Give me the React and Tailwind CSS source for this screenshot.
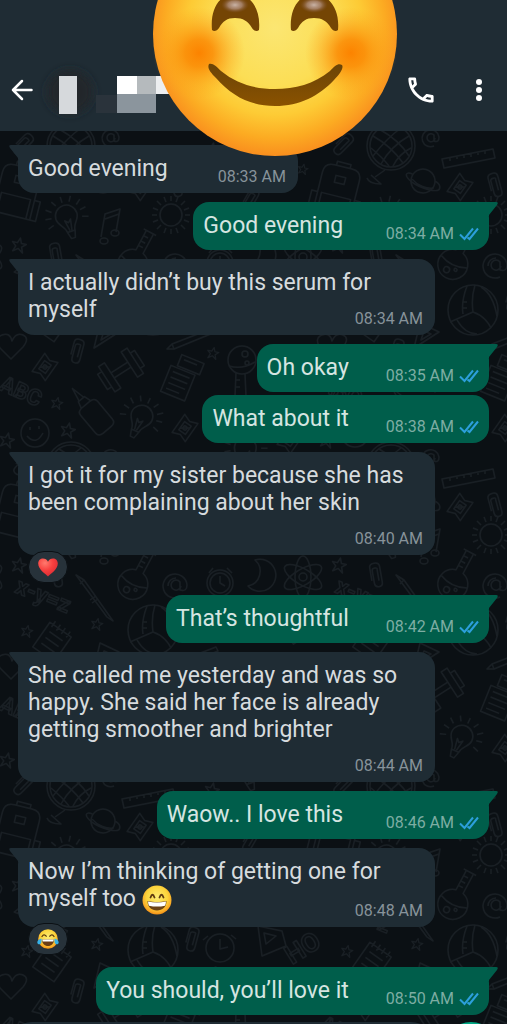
import { useState } from "react";

const messages = [
  { id: 1, side: "in", text: "Good evening", time: "08:33 AM", tail: true },
  { id: 2, side: "out", text: "Good evening ", time: "08:34 AM", tail: true },
  { id: 3, side: "in", text: "I actually didn’t buy this serum for myself", time: "08:34 AM", tail: true, layout: "tuck" },
  { id: 4, side: "out", text: "Oh okay", time: "08:35 AM", tail: true },
  { id: 5, side: "out", text: "What about it", time: "08:38 AM" },
  { id: 6, side: "in", text: "I got it for my sister because she has been complaining about her skin", time: "08:40 AM", tail: true, layout: "below", reaction: "heart" },
  { id: 7, side: "out", text: "That’s thoughtful", time: "08:42 AM", tail: true },
  { id: 8, side: "in", text: "She called me yesterday and was so happy. She said her face is already getting smoother and brighter", time: "08:44 AM", tail: true, layout: "below" },
  { id: 9, side: "out", text: "Waow.. I love this ", time: "08:46 AM", tail: true },
  { id: 10, side: "in", text: "Now I’m thinking of getting one for myself too", emoji: true, time: "08:48 AM", tail: true, layout: "tuck", reaction: "joy" },
  { id: 11, side: "out", text: "You should, you’ll love it", time: "08:50 AM", tail: true },
];

function HeartIcon() {
  return (
    <svg viewBox="0 0 20 19" className="h-[19px] w-5" aria-label="heart">
      <defs>
        <radialGradient id="heartFill" cx="0.35" cy="0.25" r="0.8">
          <stop offset="0" stopColor="#ff7a6e" />
          <stop offset="0.5" stopColor="#f8403f" />
          <stop offset="1" stopColor="#d92a33" />
        </radialGradient>
      </defs>
      <path d="M10 18.500C8 16.500 0.200 11.500 0.200 5.600C0.200 2.500 2.400 0.600 5 0.600C7.200 0.600 9 1.800 10 3.800C11 1.800 12.800 0.600 15 0.600C17.600 0.600 19.800 2.500 19.800 5.600C19.800 11.500 12 16.500 10 18.500Z" fill="url(#heartFill)" />
    </svg>
  );
}

function FaceFill({ id }) {
  return (
    <radialGradient id={id} cx="0.5" cy="0.4" r="0.6">
      <stop offset="0" stopColor="#fdec72" />
      <stop offset="0.6" stopColor="#fbd53c" />
      <stop offset="0.88" stopColor="#f9a825" />
      <stop offset="1" stopColor="#ef8e16" />
    </radialGradient>
  );
}

function JoyIcon() {
  return (
    <svg viewBox="0 0 22 20" className="h-5 w-[22px]" aria-label="tears of joy">
      <defs><FaceFill id="joyFill" /></defs>
      <circle cx="11" cy="10" r="9.800" fill="url(#joyFill)" />
      <path d="M5 7.500Q7 4.500 9.200 7.200M12.800 7.200Q15 4.500 17 7.500" fill="none" stroke="#5d3a10" strokeWidth="1.300" strokeLinecap="round" />
      <path d="M5 10.500H17C17 14.500 14.500 17 11 17S5 14.500 5 10.500Z" fill="#6b3d15" />
      <path d="M5.300 10.500H16.700L16.300 12.500H5.700Z" fill="#fff" />
      <path d="M4.500 9.500C3 9.700 0.300 11.300 0.300 13.500C0.300 15.800 3.500 16 4.200 13.800C4.600 12.600 4.700 11 4.500 9.500ZM17.500 9.500C19 9.700 21.700 11.300 21.700 13.500C21.700 15.800 18.500 16 17.800 13.800C17.400 12.600 17.300 11 17.500 9.500Z" fill="#35b1e8" />
    </svg>
  );
}

function GrinIcon() {
  return (
    <svg viewBox="0 0 30 30" className="inline-block h-[30px] w-[30px] align-top" aria-label="grinning face">
      <defs><FaceFill id="grinFill" /></defs>
      <circle cx="15" cy="15" r="14.500" fill="url(#grinFill)" />
      <path d="M8.500 12.500Q10.500 7 12.500 12.500M17.500 12.500Q19.500 7 21.500 12.500" fill="none" stroke="#5d3a10" strokeWidth="1.800" strokeLinecap="round" />
      <path d="M5.500 16Q15 18.300 24.500 16C24.500 22 20.500 25.500 15 25.500S5.500 22 5.500 16Z" fill="#6b4316" />
      <path d="M6 16.500Q15 18.700 24 16.500Q23.900 19 23 20.700Q15 22.500 7 20.700Q6.100 19 6 16.500Z" fill="#fff" />
    </svg>
  );
}

function SmileSticker() {
  return (
    <svg viewBox="0 0 244 157" className="pointer-events-none absolute left-[153px] top-0 z-10 h-[157px] w-[244px]" aria-label="smiling face">
      <defs>
        <radialGradient id="stickerFill" gradientUnits="userSpaceOnUse" cx="122" cy="28" r="128">
          <stop offset="0" stopColor="#fbe672" />
          <stop offset="0.45" stopColor="#fcde55" />
          <stop offset="0.68" stopColor="#fdcb35" />
          <stop offset="0.86" stopColor="#fcab22" />
          <stop offset="1" stopColor="#f98f1e" />
        </radialGradient>
        <radialGradient id="stickerCheek">
          <stop offset="0" stopColor="#fc8300" />
          <stop offset="0.3" stopColor="#fb8a05" stopOpacity="0.85" />
          <stop offset="0.7" stopColor="#fb9a14" stopOpacity="0.35" />
          <stop offset="1" stopColor="#fca51c" stopOpacity="0" />
        </radialGradient>
        <radialGradient id="eyeShine">
          <stop offset="0" stopColor="#c9b3a6" />
          <stop offset="0.5" stopColor="#ad8b78" stopOpacity="0.8" />
          <stop offset="1" stopColor="#7d4e2c" stopOpacity="0" />
        </radialGradient>
        <linearGradient id="stickerMouth" x1="0" y1="0" x2="0" y2="1">
          <stop offset="0" stopColor="#6b4407" />
          <stop offset="1" stopColor="#8a5200" />
        </linearGradient>
      </defs>
      <circle cx="122" cy="34" r="122" fill="url(#stickerFill)" />
      <circle cx="46" cy="53" r="46" fill="url(#stickerCheek)" />
      <circle cx="198" cy="53" r="46" fill="url(#stickerCheek)" />
      <path d="M59 30C57 8 67 -6 82 -6S108 8 106 30C104 32 101 31 99 28C95 21 90 18 82 18S70 21 66 28C64 31 61 32 59 30Z" fill="#744504" />
      <path d="M138 30C136 8 147 -6 161 -6S187 8 185 30C183 32 180 31 178 28C174 21 169 18 161 18S149 21 145 28C143 31 140 32 138 30Z" fill="#744504" />
      <ellipse cx="82" cy="5" rx="14" ry="8" fill="url(#eyeShine)" />
      <ellipse cx="161" cy="5" rx="14" ry="8" fill="url(#eyeShine)" />
      <path d="M56 64C60 63 63 66 68 71C84 84 102 89 122 89S161 84 177 71C182 66 185 63 189 65C191 68 187 74 181 80C166 96 147 106 122 106S79 96 63 78C57 72 54 68 56 64Z" fill="url(#stickerMouth)" />
    </svg>
  );
}

function Star({ x, y, s = 1 }) {
  return <path transform={`translate(${x} ${y}) rotate(12) scale(${s})`} d="M0 -7L2 -2L7 -2L3 1.500L5 7L0 3.500L-5 7L-3 1.500L-7 -2L-2 -2Z" />;
}

function Sharpener({ x, y }) {
  return (
    <g transform={`translate(${x} ${y}) rotate(-55)`}>
      <path d="M-11 -8H11L8 0L11 8H-11L-8 0Z" />
      <path d="M-5 -4H5V4H-5ZM-3 -4L3 4" />
      <circle r="2" />
    </g>
  );
}

function Clip({ x, y, r = 15 }) {
  return <path transform={`translate(${x} ${y}) rotate(${r})`} d="M-5 5V-8Q-5 -12 0 -12T5 -8V8Q5 12 1 12T-3 8V-5Q-3 -7 0 -7T2 -5V6" />;
}

function Bulb({ x, y, r = -18 }) {
  return (
    <g transform={`translate(${x} ${y}) rotate(${r})`}>
      <path d="M-4 14C-4 7 -11 5 -11 -2A11 11 0 0 1 11 -2C11 5 4 7 4 14L2 21H-2ZM-4 14H4M-1 13L-3 2L0 5L3 2L1 13" />
      <path d="M0 -16V-22M7 -15L10 -20M13 -10L18 -14M15 -4L21 -5M15 3L21 5M-7 -15L-10 -20M-13 -10L-18 -14M-15 -4L-21 -5M-15 3L-21 5" />
    </g>
  );
}

// one 320px tile of the wallpaper
function Doodles() {
  return (
    <g>
      <g transform="translate(71 146)">
        <circle r="24" /><circle r="21" />
        <path d="M-18 -10Q0 0 12 17M-12 -17Q8 -6 18 10M-20 2Q-8 12 -2 20M10 -18Q-4 -8 -18 10M18 -10Q0 0 -10 18M20 2Q8 8 2 20M-6 24L-16 31M-20 29L-10 38Q-22 38 -24 32" />
      </g>
      <g transform="translate(103 181) rotate(15)">
        <circle r="12" /><path d="M-12 -4C-20 -5 -20 0 -10 4S18 8 18 3S14 -2 12 -3M-11 1C-4 6 6 7 12 4" />
      </g>
      <path transform="translate(111 138)" d="M4 0A4 4 0 1 1 3 -3V3Q8 5 8 -1A8.500 8.500 0 1 0 3 8" />
      <path d="M122 159L173 149L175 158L124 168ZM130 158V161M137 156V159M144 155V158M151 153V157M158 152V155M165 151V154" />
      <Sharpener x={140} y={187} />
      <Clip x={175} y={185} r={-15} />
      <Clip x={23} y={144} r={45} />
      <Star x={303} y={169} s={0.7} />
      <g transform="translate(17 188) rotate(14)">
        <path d="M-18 28V-12Q-18 -22 -8 -22H10Q20 -22 20 -12V28ZM-14 28V8H16V28M-4 -12H6V-5H-4ZM-6 -22V-26H8V-22M-18 8H-24V28H-18M20 8H26V28H20" />
      </g>
      <g transform="translate(171 215)">
        <circle r="11" />
        <path d="M0 -14V-19M0 14V19M-14 0H-19M14 0H19M10 -10L14 -14M-10 10L-14 14M10 10L14 14M-10 -10L-14 -14M5 -13L7 -18M13 -5L18 -7M13 5L18 7M5 13L7 18M-5 13L-7 18M-13 5L-18 7M-13 -5L-18 -7M-5 -13L-7 -18" />
      </g>
      <Bulb x={67} y={218} />
      <path d="M101 237L105 214L120 209L116 232M105 219L119 214" />
      <ellipse cx="104" cy="241" rx="4" ry="3" /><ellipse cx="115" cy="233" rx="4" ry="3" />
      <Star x={19} y={245} />
      <g transform="translate(133 264) rotate(28)">
        <path d="M-4 -14V-36H4V-14A15 15 0 1 1 -4 -14ZM-7 -36H7M-4 -30H1M-4 -24H1M-4 -19H1M-14 -2Q0 4 14 -3" />
        <circle cx="-3" cy="8" r="3" /><circle cx="5" cy="4" r="1.500" />
      </g>
      <path transform="translate(176 266)" d="M5 0A5 5 0 1 1 4 -4V4Q11 6 11 -1A12 12 0 1 0 4 11M-8 0A8 8 0 0 1 0 -8" />
      <g transform="translate(153 310)">
        <circle r="25" /><path d="M2 -25Q-2 -12 0 2L-23 12M0 2Q12 6 18 18M-6 -24Q-12 -8 -10 4M8 -23Q20 -16 24 6M4 24Q-8 24 -16 10M-10 -8H-6M-10 -2H-6" />
      </g>
      <path d="M11 39L0 28Q-6 18 2 15T12 21Q16 12 23 15T23 27Z" />
      <Sharpener x={45} y={47} />
      <Clip x={77} y={31} />
      <path d="M94 28L100 3L119 12ZM101 20L104 11L111 14Z" />
      <g transform="translate(121 50) rotate(-33)">
        <path d="M-10 -3H10V3H-10ZM-17 -15H-10V15H-17ZM10 -15H17V15H10ZM-22 -9H-17V9H-22ZM17 -9H22V9H17Z" />
      </g>
      <text x="-2" y="70" fontSize="22" fontWeight="700" transform="rotate(24 0 70)">ABC</text>
      <Star x={57} y={83} s={0.8} />
      <g transform="translate(93 93) rotate(-40)">
        <path d="M-11 -6Q-11 -11 -5 -11H5Q11 -11 11 -6V17Q11 22 5 22H-5Q-11 22 -11 17ZM-6 -11L-4 -18H4L6 -11M-3 -18L0 -32L3 -18" />
      </g>
      <Bulb x={141} y={98} r={25} />
      <circle cx="35" cy="113" r="14" /><path d="M27 116Q36 126 43 113M30 107V110M39 106V109" />
      <Star x={68} y={110} /><Star x={7} y={120} />
      <g transform="translate(181 58) rotate(22)">
        <path d="M-14 -8H12V20H-14ZM-10 -3H8M-10 3H8M-10 9H8M-10 15H4M-8 -22H16V-10H-8ZM-4 -18H10" />
      </g>
      <Sharpener x={185} y={108} />
      <path d="M167 29L172 24L216 7L218 11L174 29ZM172 24L174 29" />
      <Star x={213} y={33} s={0.8} />
      <g transform="translate(242 40)">
        <circle r="14" /><path d="M-13 6Q0 10 13 2M-6 13L-7 36H4L3 14M-7 20H-2M-7 27H-2" /><circle cx="3" cy="-6" r="3" /><circle cx="5" cy="3" r="2" />
      </g>
      <text x="14" y="272" fontSize="23" fontWeight="700" transform="rotate(22 14 272)">x-y=z</text>
      <path d="M76 255L84 260L113 301L107 297ZM84 260L80 264M96 276L90 280M98 279L92 283" />
      <Star x={97} y={304} s={0.8} /><Star x={27} y={311} s={0.8} />
      <path transform="translate(52 322) rotate(35)" d="M-13 -15H13V15H-13ZM-8 -7H8M-8 0H8M-8 7H8M-9 -19V-12M-3 -19V-12M3 -19V-12M9 -19V-12" />
      <circle cx="220" cy="263" r="13" /><circle cx="220" cy="263" r="10" /><path d="M220 256V263L225 266M209 253L213 248M227 248L232 253" />
      <path d="M255 240A16 16 0 1 1 248 266A15 15 0 0 0 255 240Z" />
      <g transform="translate(303 257)">
        <ellipse rx="21" ry="8" transform="rotate(30)" /><ellipse rx="21" ry="8" transform="rotate(90)" /><ellipse rx="21" ry="8" transform="rotate(150)" /><circle r="4" />
      </g>
      <Clip x={192} y={299} /><Clip x={56} y={255} r={-10} />
      <circle cx="220" cy="308" r="14" /><path d="M220 299V309L228 307M208 296L203 300M231 295L236 299" />
      <path d="M258 286L282 291L286 306L262 316ZM264 293L276 296L266 304Z" />
      <text x="292" y="325" fontSize="26" fontWeight="700" transform="rotate(-32 292 325)">HO</text>
      <Bulb x={246} y={130} /><Star x={212} y={150} /><Star x={290} y={85} />
      <Sharpener x={290} y={120} /><Clip x={250} y={200} r={30} />
    </g>
  );
}

// shapes crossing a tile edge are carried on by the shifted copies
function Wallpaper() {
  return (
    <svg className="pointer-events-none absolute inset-0 h-full w-full" aria-hidden="true">
      <defs>
        <pattern id="doodles" width="320" height="320" y="-131" patternUnits="userSpaceOnUse">
          <g fill="none" stroke="#191f24" strokeWidth="1.500" strokeLinejoin="round" fontFamily="Roboto, sans-serif">
            <Doodles />
            <g transform="translate(320 0)"><Doodles /></g>
            <g transform="translate(-320 0)"><Doodles /></g>
            <g transform="translate(0 -320)"><Doodles /></g>
          </g>
        </pattern>
      </defs>
      <rect width="100%" height="100%" fill="url(#doodles)" />
    </svg>
  );
}

// blurred-out avatar and contact name
function HiddenContact() {
  return (
    <svg viewBox="0 0 135 80" className="h-20 w-[135px] overflow-visible" aria-hidden="true">
      <defs>
        <filter id="soft" x="-30%" y="-30%" width="160%" height="160%"><feGaussianBlur stdDeviation="4" /></filter>
      </defs>
      <ellipse cx="30" cy="42" rx="23" ry="22" fill="#22262a" filter="url(#soft)" />
      <rect x="56" y="45" width="21" height="18" fill="#2a333b" />
      <rect x="19" y="26" width="18" height="38" fill="#d6d9dc" />
      <rect x="77" y="26" width="20" height="18" fill="#fff" />
      <rect x="97" y="26" width="19" height="18" fill="#b5babd" />
      <rect x="116" y="26" width="19" height="18" fill="#eceef0" />
      <path d="M77 44H116V63H77Z" fill="#8b959d" />
    </svg>
  );
}

function Ticks() {
  return (
    <svg viewBox="0 0 20 14" className="h-[14px] w-5" fill="none" stroke="#2c9fdb" strokeWidth="2" aria-label="read">
      <path d="M1 7.500L5.500 12L14 1.500M8.500 10.500L10.500 12L19 1.500" />
    </svg>
  );
}

function Header() {
  return (
    <header className="relative z-10 flex h-[131px] shrink-0 items-center bg-[#1f2c34] pt-[49px] pr-4 pl-[11px] text-white">
      <button type="button" aria-label="Back">
        <svg viewBox="0 0 22 22" className="h-[22px] w-[22px]" fill="none" stroke="currentColor" strokeWidth="2.500" strokeLinecap="round" strokeLinejoin="round">
          <path d="M20.500 11H2M11 2L2 11L11 20" />
        </svg>
      </button>
      <div className="ml-[7px]">
        <HiddenContact />
      </div>
      <div className="ml-auto flex items-center gap-8">
        <button type="button" aria-label="Call">
          <svg viewBox="2 2 20 20" className="h-7 w-7" fill="currentColor">
            <path d="M6.540 5c.06.890.210 1.760.450 2.590l-1.200 1.200c-.410-1.200-.670-2.470-.760-3.790h1.510m9.860 12.020c.850.240 1.720.390 2.600.450v1.490c-1.320-.090-2.590-.350-3.800-.750l1.200-1.190M7.500 3H4c-.550 0-1 .450-1 1 0 9.390 7.610 17 17 17 .550 0 1-.450 1-1v-3.490c0-.550-.450-1-1-1-1.240 0-2.450-.200-3.570-.570-.100-.040-.210-.050-.310-.050-.260 0-.510.100-.710.290l-2.200 2.200c-2.830-1.450-5.150-3.760-6.590-6.590l2.200-2.200c.280-.280.360-.670.250-1.020C8.700 6.450 8.500 5.250 8.500 4c0-.550-.450-1-1-1z" />
          </svg>
        </button>
        <button type="button" aria-label="More options" className="flex w-6 flex-col items-center gap-[2px]">
          <span className="h-[6px] w-[6px] rounded-full bg-white"></span>
          <span className="h-[6px] w-[6px] rounded-full bg-white"></span>
          <span className="h-[6px] w-[6px] rounded-full bg-white"></span>
        </button>
      </div>
      <SmileSticker />
    </header>
  );
}

function Tail({ out }) {
  return out ? (
    <svg viewBox="0 0 25 14" className="absolute top-0 -right-[9px] h-[14px] w-[25px]" fill="#005e4b">
      <path d="M0 0H23Q26 0 24 3L16 13V14H0Z" />
    </svg>
  ) : (
    <svg viewBox="0 0 25 14" className="absolute top-0 -left-[9px] h-[14px] w-[25px]" fill="#1f2c34">
      <path d="M25 0H2Q-1 0 1 3L9 13V14H25Z" />
    </svg>
  );
}

function Reaction({ name }) {
  return (
    <span className="absolute -bottom-7 left-[10px] flex h-8 w-10 items-center justify-center rounded-full border border-[#0b1014] bg-[#27323a]">
      {name === "heart" ? <HeartIcon /> : <JoyIcon />}
    </span>
  );
}

function IncomingMessage({ message }) {
  const { text, time, layout, emoji, reaction } = message;

  return (
    <li
      className={`relative mt-[9px] max-w-[417px] self-start rounded-2xl bg-[#1f2c34] pt-[10px] pr-3 pb-2 pl-[10px] text-[23px] leading-[27px] text-[#d6dbde] ${
        reaction ? "mb-[31px]" : ""
      } ${layout ? "flow-root w-full" : "flex items-end gap-[50px]"}`}
    >
      <Tail />
      <p className={layout === "tuck" ? "relative inline" : layout === "below" ? "relative" : "relative mb-[3px]"}>
        {text}
        {emoji && <> <GrinIcon /></>}
      </p>
      <time
        className={`text-[16px] leading-4 text-[#87939a] ${
          layout === "tuck" ? `float-right ${emoji ? "mt-[18px]" : "mt-[15px]"}` : layout === "below" ? "mt-[15px] block text-right" : ""
        }`}
      >
        {time}
      </time>
      {reaction && <Reaction name={reaction} />}
    </li>
  );
}

function OutgoingMessage({ message }) {
  return (
    <li
      className={`relative flex max-w-[417px] items-end gap-[37px] self-end rounded-2xl bg-[#005e4b] px-[10px] pt-[10px] pb-2 text-[#d5e5e1] ${
        message.tail ? "mt-[9px]" : "mt-[3px]"
      }`}
    >
      {message.tail && <Tail out />}
      <p className="relative mb-[3px] text-[23px] leading-[27px] whitespace-break-spaces">{message.text}</p>
      <div className="flex shrink-0 items-center gap-[5px] text-[16px] leading-4 text-[#7dada3]">
        <time>{message.time}</time>
        <Ticks />
      </div>
    </li>
  );
}

function App() {
  const [draft, setDraft] = useState("");

  return (
    <div className="flex h-screen flex-col overflow-hidden bg-[#0b1014] font-['Roboto',sans-serif]">
      <Header />
      <main className="relative min-h-0 grow">
        <Wallpaper />
        <ul className="relative flex flex-col px-[18px] pt-[5px]">
          {messages.map((message) =>
            message.side === "out" ? (
              <OutgoingMessage key={message.id} message={message} />
            ) : (
              <IncomingMessage key={message.id} message={message} />
            )
          )}
        </ul>
        <form className="relative mt-[7px] flex gap-2 px-2" onSubmit={(event) => event.preventDefault()}>
          <input
            aria-label="Message"
            value={draft}
            onChange={(event) => setDraft(event.target.value)}
            className="h-14 grow rounded-3xl bg-[#1f2c34] px-5 text-white outline-none"
          />
          <button type="submit" aria-label="Record voice" className="h-14 w-14 rounded-full bg-[#00a884]"></button>
        </form>
      </main>
    </div>
  );
}

export default App;
